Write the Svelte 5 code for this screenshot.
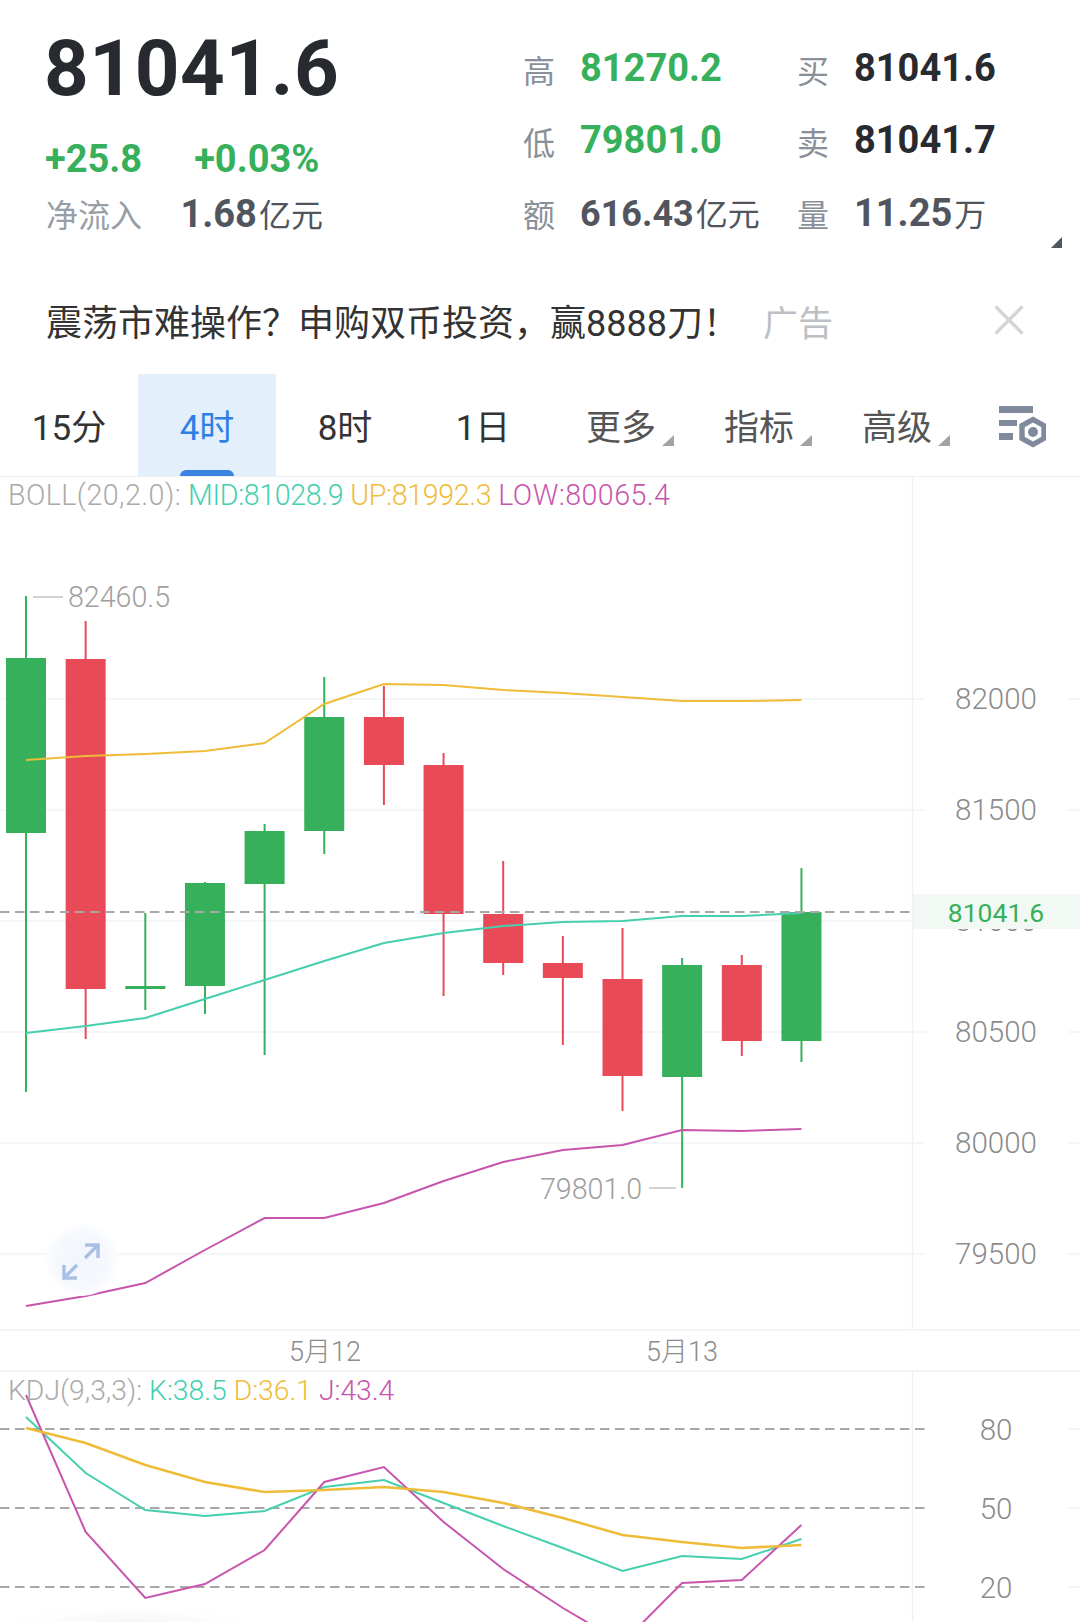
<script>
  const tabs = [
    { label: '15分' },
    { label: '4时', active: true },
    { label: '8时' },
    { label: '1日' },
    { label: '更多', caret: true },
    { label: '指标', caret: true },
    { label: '高级', caret: true }
  ];

  // candles in page pixels: wick top/bottom, body top/bottom
  const candles = [
    ['g', 596, 1092, 658, 833],
    ['r', 621, 1039, 659, 989],
    ['g', 913, 1010, 986, 989],
    ['g', 882, 1014, 883, 986],
    ['g', 824, 1055, 831, 884],
    ['g', 677, 854, 717, 831],
    ['r', 686, 805, 717, 765],
    ['r', 753, 996, 765, 914],
    ['r', 861, 975, 914, 963],
    ['r', 936, 1045, 963, 978],
    ['r', 928, 1111, 979, 1076],
    ['g', 958, 1188, 965, 1077],
    ['r', 955, 1056, 965, 1041],
    ['g', 868, 1062, 912, 1041]
  ];

  const GREEN = '#36b05a';
  const RED = '#e84a57';

  const xAt = (i) => 26 + i * 59.65;
  const line = (ys) => ys.map((y, i) => `${xAt(i).toFixed(1)},${y}`).join(' ');

  const mid = [1033, 1026, 1018, 999, 980, 961, 943, 933, 926, 922, 921, 916, 916, 913];
  const up = [760, 756, 754, 751, 743, 704, 684, 685, 690, 693, 697, 701, 701, 700];
  const low = [1306, 1296, 1283, 1250, 1218, 1218, 1203, 1181, 1162, 1150, 1145, 1130, 1131, 1129];

  const k = [1417, 1473, 1510, 1516, 1511, 1487, 1480, 1503, 1526, 1548, 1571, 1556, 1559, 1539];
  const d = [1428, 1443, 1465, 1482, 1492, 1490, 1487, 1492, 1503, 1518, 1535, 1542, 1548, 1545];
  const j = [1395, 1532, 1598, 1584, 1550, 1482, 1467, 1522, 1569, 1608, 1643, 1583, 1580, 1525];

  const priceAxis = [
    [699, '82000'],
    [810, '81500'],
    [921, '81000'],
    [1032, '80500'],
    [1143, '80000'],
    [1254, '79500']
  ];
  const kdjAxis = [
    [1429, '80'],
    [1508, '50'],
    [1587, '20']
  ];
</script>

<div class="page">
  <header class="quote">
    <div class="summary">
      <div class="last">81041.6</div>
      <div class="change">
        <span>+25.8</span>
        <span>+0.03%</span>
      </div>
      <div class="flow">
        <span class="flow-label">净流入</span>
        <b>1.68</b><span class="unit">亿元</span>
      </div>
    </div>
    <div class="stats">
      <span class="k">高</span><span class="v up">81270.2</span>
      <span class="k">买</span><span class="v">81041.6</span>
      <span class="k">低</span><span class="v up">79801.0</span>
      <span class="k">卖</span><span class="v">81041.7</span>
      <span class="k">额</span><span class="v muted small">616.43<span class="unit">亿元</span></span>
      <span class="k">量</span><span class="v muted">11.25<span class="unit">万</span></span>
    </div>
    <i class="corner"></i>
  </header>

  <div class="ad">
    <span class="ad-text">震荡市难操作&#xFF1F;申购双币投资&#xFF0C;赢8888刀&#xFF01;</span>
    <span class="ad-tag">广告</span>
    <svg class="ad-close" width="30" height="30" viewBox="0 0 30 30">
      <path d="M1.5 1.5 28.5 28.5M28.5 1.5 1.5 28.5" stroke="#d3d6d9" stroke-width="3.4" fill="none" />
    </svg>
  </div>

  <nav class="tabs">
    {#each tabs as tab}
      <div class="tab" class:active={tab.active} class:dim={tab.caret}>
        {tab.label}
        {#if tab.caret}<i class="caret"></i>{/if}
      </div>
    {/each}
    <div class="tab-icon">
      <svg width="50" height="46" viewBox="0 0 50 46">
        <g fill="#7f8b9d">
          <rect x="3" y="2" width="34" height="7" />
          <rect x="3" y="16" width="18" height="6" />
          <rect x="3" y="29" width="14" height="7" />
          <circle cx="37" cy="28" r="5" />
        </g>
        <path d="M37 15.5 48 21.7V34.3L37 40.5 26 34.3V21.7Z" fill="none" stroke="#7f8b9d" stroke-width="5.4" />
      </svg>
    </div>
  </nav>

  <svg class="chart" width="1080" height="1146" viewBox="0 476 1080 1146">
    <defs>
      <radialGradient id="btn">
        <stop offset="0" stop-color="#f1f6fd" />
        <stop offset="0.7" stop-color="#f5f8fd" />
        <stop offset="1" stop-color="#fcfdfe" />
      </radialGradient>
      <radialGradient id="smudge">
        <stop offset="0" stop-color="#ebebeb" />
        <stop offset="1" stop-color="#ffffff" stop-opacity="0" />
      </radialGradient>
    </defs>

    <!-- frame -->
    <g stroke="#f0f1f2" stroke-width="1.5">
      <line x1="0" x2="1080" y1="476.5" y2="476.5" />
      <line x1="0" x2="1080" y1="1330" y2="1330" />
      <line x1="0" x2="1080" y1="1371" y2="1371" />
      <line x1="912.5" x2="912.5" y1="476" y2="1330" />
      <line x1="912.5" x2="912.5" y1="1371" y2="1622" />
    </g>
    {#each priceAxis as [y, label]}
      <line class="grid" x1="0" x2="925" y1={y} y2={y} />
      <line class="grid" x1="1068" x2="1080" y1={y} y2={y} />
      <text class="axis" x="996" y={y + 10} text-anchor="middle">{label}</text>
    {/each}

    <!-- candles -->
    {#each candles as [dir, top, bottom, open, close], i}
      <line x1={xAt(i)} x2={xAt(i)} y1={top} y2={bottom} stroke={dir === 'g' ? GREEN : RED} stroke-width="2" />
      <rect x={xAt(i) - 20} y={open} width="40" height={close - open} fill={dir === 'g' ? GREEN : RED} />
    {/each}

    <polyline class="ln" points={line(mid)} stroke="#45cfae" />
    <polyline class="ln" points={line(up)} stroke="#efbc3a" />
    <polyline class="ln" points={line(low)} stroke="#c855ad" />

    <!-- last price, its tag sits on top of the 81000 axis label -->
    <line class="dash" x1="0" x2="912" y1="912" y2="912" />
    <rect x="913" y="894" width="167" height="35" fill="#f2f9f4" />
    <text class="axis last-tag" x="996" y="922" text-anchor="middle">81041.6</text>

    <!-- extremes -->
    <line class="tick" x1="33" x2="63" y1="597" y2="597" />
    <text class="note" x="68" y="607">82460.5</text>
    <text class="note" x="540" y="1199">79801.0</text>
    <line class="tick" x1="649" x2="676" y1="1188" y2="1188" />

    <!-- fullscreen button -->
    <circle cx="82" cy="1260" r="36" fill="url(#btn)" />
    <g fill="none" stroke="#a9bfe3" stroke-width="3.4">
      <path d="M85 1258 97 1246M85 1245H98V1258" />
      <path d="M77 1265 65 1277M64 1265V1278H77" />
    </g>

    <text class="legend" x="8" y="505">
      <tspan class="wide" fill="#aaa">BOLL(20,2.0):</tspan>
      <tspan class="tight" fill="#45cfae">MID:81028.9</tspan>
      <tspan class="tight" fill="#efbc3a">UP:81992.3</tspan>
      <tspan class="wide" fill="#c855ad">LOW:80065.4</tspan>
    </text>

    <text class="date" x="325" y="1361" text-anchor="middle">5月12</text>
    <text class="date" x="682" y="1361" text-anchor="middle">5月13</text>

    <!-- KDJ -->
    {#each kdjAxis as [y, label]}
      <line class="dash" x1="0" x2="925" y1={y} y2={y} />
      <line class="grid" x1="1068" x2="1080" y1={y} y2={y} />
      <text class="axis" x="996" y={y + 11} text-anchor="middle">{label}</text>
    {/each}
    <polyline class="ln" points={line(k)} stroke="#45cfae" />
    <polyline class="ln" points={line(j)} stroke="#c855ad" />
    <polyline class="ln thick" points={line(d)} stroke="#efbc3a" />
    <text class="legend kdj" x="8" y="1400">
      <tspan fill="#aaa">KDJ(9,3,3):</tspan>
      <tspan fill="#45cfae">K:38.5</tspan>
      <tspan fill="#efbc3a">D:36.1</tspan>
      <tspan fill="#c855ad">J:43.4</tspan>
    </text>
    <ellipse cx="130" cy="1632" rx="150" ry="30" fill="url(#smudge)" />
  </svg>
</div>

<style>
  :global(body) {
    margin: 0;
    background: #fff;
  }

  .page {
    width: 1080px;
    height: 1622px;
    overflow: hidden;
    background: #fff;
    font-family: Roboto, "Noto Sans CJK SC", sans-serif;
  }

  .quote {
    position: relative;
    display: flex;
    height: 265px;
    box-sizing: border-box;
    padding: 30px 0 0 46px;
  }

  .summary {
    width: 478px;
  }

  .last {
    margin-left: -2px;
    font-size: 78px;
    line-height: 78px;
    font-weight: 700;
    letter-spacing: 0.6px;
    color: #272a2f;
  }

  .change {
    display: flex;
    gap: 52px;
    margin: 26px 0 0 -1px;
    font-size: 38px;
    line-height: 50px;
    font-weight: 700;
    color: #36b05a;
  }

  .flow {
    margin-top: 5px;
    font-size: 38px;
    line-height: 50px;
    color: #50555e;
  }

  .flow b {
    font-weight: 700;
  }

  .flow-label {
    display: inline-block;
    width: 136px;
    margin-right: -11px;
    font-size: 32px;
    color: #979ea6;
  }

  .unit {
    font-size: 32px;
    font-weight: 400;
    margin-left: 2px;
  }

  .stats {
    display: grid;
    grid-template-columns: 57px 217px 57px auto;
    grid-auto-rows: 72px;
    align-items: center;
    margin: 2px 0 0 -1px;
  }

  .k {
    font-size: 32px;
    color: #8a9099;
    padding-top: 2px;
  }

  .v {
    font-size: 38px;
    font-weight: 700;
    color: #272a2f;
  }

  .v.up {
    color: #36b05a;
  }

  .v.muted {
    color: #50555e;
  }

  .v.small {
    font-size: 36px;
  }

  .corner {
    position: absolute;
    left: 1051px;
    top: 237px;
    border-style: solid;
    border-width: 0 0 11px 11px;
    border-color: transparent transparent #50555e transparent;
  }

  .ad {
    display: flex;
    align-items: center;
    height: 109px;
    box-sizing: border-box;
    padding: 1px 0 0 46px;
  }

  .ad-text {
    width: 717px;
    font-size: 36px;
    color: #333;
    white-space: nowrap;
  }

  .ad-tag {
    width: 231px;
    font-size: 35px;
    color: #bcbfc3;
  }

  .tabs {
    display: flex;
    height: 102px;
  }

  .tab {
    position: relative;
    display: flex;
    align-items: center;
    justify-content: center;
    width: 138px;
    padding-bottom: 2px;
    box-sizing: border-box;
    font-size: 35px;
    color: #333;
  }

  .tab.dim {
    color: #555;
  }

  .tab.active {
    background: #e3effb;
    color: #2f80e4;
  }

  .tab.active::after {
    content: "";
    position: absolute;
    left: 42px;
    bottom: 0;
    width: 54px;
    height: 6px;
    border-radius: 6px 6px 0 0;
    background: #3b82e0;
  }

  .caret {
    position: absolute;
    right: 16px;
    bottom: 30px;
    border-style: solid;
    border-width: 0 0 11px 12px;
    border-color: transparent transparent #a3a3a3 transparent;
  }

  .tab-icon {
    padding: 30px 0 0 30px;
  }

  .chart {
    display: block;
  }

  .grid {
    stroke: #f2f3f4;
    stroke-width: 1.5;
  }

  .dash {
    stroke: #a8a8a8;
    stroke-width: 2;
    stroke-dasharray: 9.5 5.5;
  }

  .tick {
    stroke: #c4c4c4;
    stroke-width: 1.5;
  }

  .ln {
    fill: none;
    stroke-width: 2;
  }

  .ln.thick {
    stroke-width: 2.6;
  }

  .axis {
    font-size: 29.5px;
    font-weight: 300;
    fill: #8c8c8c;
  }

  .last-tag {
    font-size: 26.5px;
    font-weight: 400;
    fill: #36b05a;
  }

  .note {
    font-size: 28.6px;
    font-weight: 300;
    fill: #a0a0a0;
  }

  .legend {
    font-size: 28.6px;
    font-weight: 300;
  }

  .legend.kdj {
    font-size: 28.3px;
  }

  .legend .wide {
    letter-spacing: 0.45px;
  }

  .legend .tight {
    letter-spacing: -0.35px;
  }

  .date {
    font-size: 27px;
    font-weight: 300;
    fill: #8c8c8c;
  }
</style>
